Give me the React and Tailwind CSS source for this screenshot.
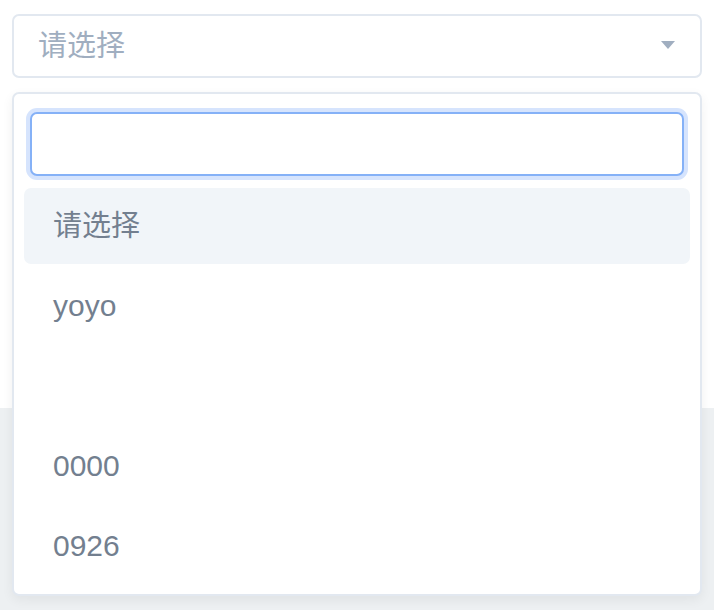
import React from "react";

const options = [
  { label: "请选择", active: true },
  { label: "yoyo" },
  { label: "" },
  { label: "0000" },
  { label: "0926" },
];

const App = () => {
  return (
    <div className="relative min-h-[610px] bg-[#edf0f2] font-['Liberation_Sans','Noto_Sans_CJK_SC',sans-serif]">
      <div className="h-[408px] bg-white px-3 pt-[14px]">
        <div className="flex h-[64px] items-center justify-between rounded-[7px] border-2 border-[#e2e8f0] bg-white pl-6 pr-[25px]">
          <span className="text-[29px] leading-none text-[#a0aec0]">请选择</span>
          <svg width="14" height="8" viewBox="0 0 14 8" className="mb-[2px]">
            <path d="M0 0 H14 L7 8 Z" fill="#a0aec0" />
          </svg>
        </div>
      </div>

      <div className="absolute left-3 top-[92px] w-[690px] rounded-[7px] border-2 border-[#e2e8f0] bg-white pb-[10px] shadow-[0_4px_12px_rgba(0,0,0,0.06)]">
        <div className="px-4 pt-[18px]">
          <input
            className="block h-[64px] w-full rounded-[7px] border-2 border-[#85b1f7] bg-white px-4 text-[30px] text-[#4a5568] shadow-[0_0_0_4px_#d6e4fd] outline-none"
          />
        </div>
        <ul className="mt-3 flex flex-col gap-1 px-[10px]">
          {options.map((opt, i) => (
            <li
              key={i}
              className={
                "flex h-[76px] items-center rounded-[7px] pl-[29px] text-[30px] leading-none text-[#737f8f] " +
                (opt.active ? "bg-[#f1f5f9]" : "")
              }
            >
              <span className={opt.active ? "text-[29px]" : ""}>{opt.label}</span>
            </li>
          ))}
        </ul>
      </div>
    </div>
  );
};

export default App;
